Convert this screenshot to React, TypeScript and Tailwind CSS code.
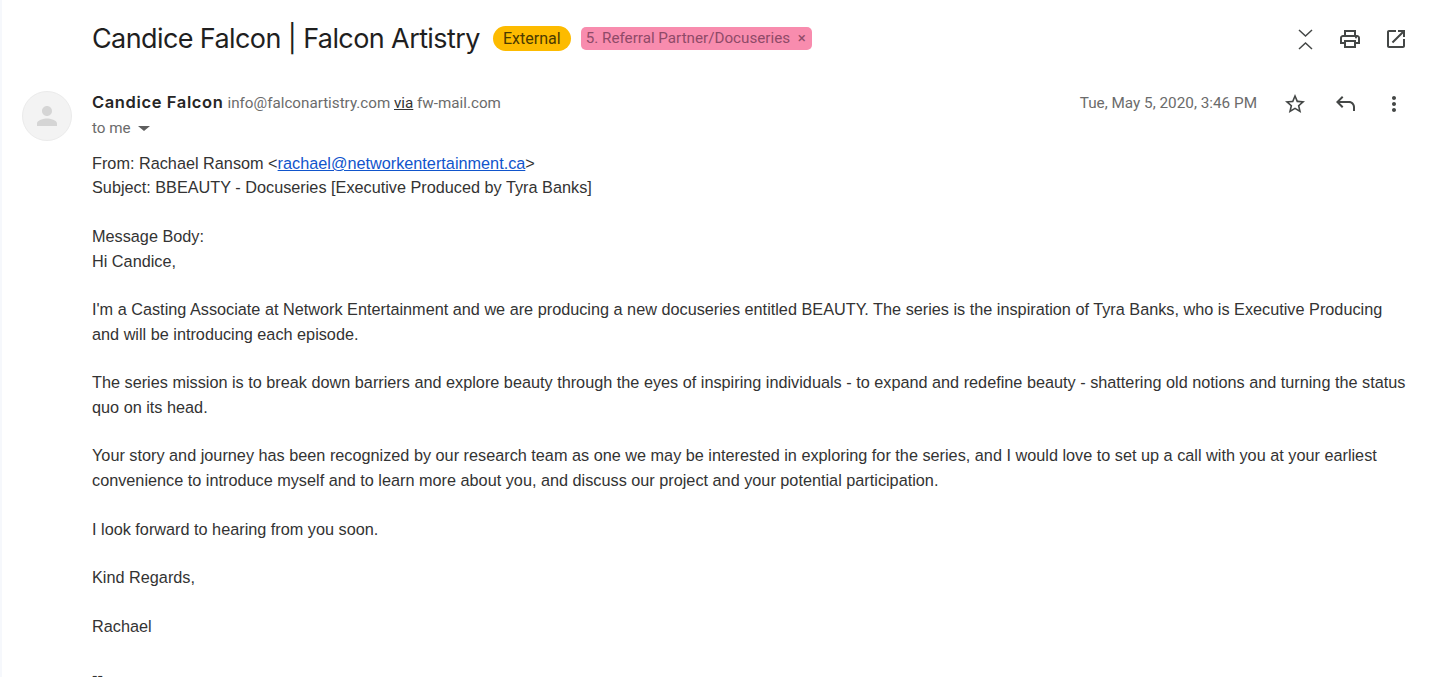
import React from "react";

const body = "font-['Liberation_Sans',Arial,sans-serif]";

const Icon = ({ d, className }: { d: string; className?: string }) => (
  <svg viewBox="0 0 24 24" className={className} fill="currentColor">
    <path d={d} />
  </svg>
);

const Paragraph = ({ children }: { children: React.ReactNode }) => <p className="mb-[24.3px]">{children}</p>;

export default function App() {
  return (
    <div className="h-[677px] w-[1432px] overflow-hidden bg-white border-l-2 border-[#f6f8fc]">
      {/* Subject */}
      <div className="flex h-[77px] items-start pl-[90px] pr-[24px] pt-[21px]">
        <h1 className="font-['Inter',sans-serif] text-[27px] leading-[36px] font-normal tracking-[-0.6px] text-[#1f1f1f]">
          Candice Falcon | Falcon Artistry
        </h1>
        <span className="ml-[13px] mt-[5px] flex h-[25px] w-[78px] items-center justify-center rounded-full bg-[#fdbb00] font-['Roboto',sans-serif] text-[16px] text-[#4a3a00]">
          External
        </span>
        <span className="ml-[10px] mt-[6px] flex h-[23px] w-[231px] items-center justify-between rounded-[5px] bg-[#f88cae] pl-[5px] pr-[6px] font-['Roboto',sans-serif] text-[15.2px] text-[#8f4a68]">
          5. Referral Partner/Docuseries
          <span className="text-[15px] leading-none">×</span>
        </span>
        <div className="ml-auto flex items-center gap-[22px] pt-[6px] text-[#444746]">
          <svg viewBox="0 0 24 24" className="h-[24px] w-[24px]" fill="none" stroke="currentColor" strokeWidth="1.5">
            <path d="M7 3l6.5 6L20 3M7 22l6.5-6 6.5 6" />
          </svg>
          <Icon className="h-[24px] w-[24px]" d="M19 8h-1V3H6v5H5c-1.66 0-3 1.34-3 3v6h4v4h12v-4h4v-6c0-1.66-1.34-3-3-3zM8 5h8v3H8V5zm8 12v2H8v-4h8v2zm2-2v-2H6v2H4v-4c0-.55.45-1 1-1h14c.55 0 1 .45 1 1v4h-2zm0-3.5a1 1 0 1 0 0-2 1 1 0 0 0 0 2z" />
          <Icon className="h-[24px] w-[24px]" d="M19 19H5V5h7V3H5c-1.11 0-2 .9-2 2v14c0 1.1.89 2 2 2h14c1.1 0 2-.9 2-2v-7h-2v7zM14 3v2h3.59l-9.83 9.83 1.41 1.41L19 6.41V10h2V3h-7z" />
        </div>
      </div>

      {/* Sender row */}
      <div className="flex pl-[20px] pr-[26px]">
        <div className="mt-[14px] flex h-[50px] w-[50px] shrink-0 items-center justify-center rounded-full border border-[#ebebeb] bg-[#f3f3f3] text-[#d5d5d5]">
          <Icon className="h-[30px] w-[30px]" d="M12 12c2.21 0 4-1.79 4-4s-1.79-4-4-4-4 1.79-4 4 1.79 4 4 4zm0 2c-2.67 0-8 1.34-8 4v2h16v-2c0-2.66-5.33-4-8-4z" />
        </div>
        <div className="ml-[20px] flex-1 pt-[14px]">
          <div className="flex h-[24px] items-baseline font-['Roboto',sans-serif]">
            <span className="font-['Inter',sans-serif] text-[16.5px] leading-[22px] font-semibold tracking-[0.62px] text-[#262626]">Candice Falcon</span>
            <span className="ml-[4px] text-[15.2px] leading-[24px] text-[#6b6b6b]">
              info@falconartistry.com <span className="text-[#333] underline">via</span> fw-mail.com
            </span>
            <div className="ml-auto flex items-center self-center pt-[2px] text-[#444746]">
              <span className="mb-[2px] mr-[26px] text-[15.3px] text-[#6b6b6b]">Tue, May 5, 2020, 3:46 PM</span>
              <Icon className="h-[24px] w-[24px]" d="M22 9.24l-7.19-.62L12 2 9.19 8.63 2 9.24l5.46 4.73L5.82 21 12 17.27 18.18 21l-1.63-7.03L22 9.24zM12 15.4l-3.76 2.27 1-4.28-3.32-2.88 4.38-.38L12 6.1l1.71 4.04 4.38.38-3.32 2.88 1 4.28L12 15.4z" />
              <Icon className="ml-[26px] h-[24px] w-[24px]" d="M20 19v-4c0-2.2-1.8-4-4-4H6.83l3.58 3.59L9 16l-6-6 6-6 1.41 1.41L6.83 9H16c3.31 0 6 2.69 6 6v4h-2z" />
              <Icon className="ml-[25px] h-[24px] w-[24px]" d="M12 8c1.1 0 2-.9 2-2s-.9-2-2-2-2 .9-2 2 .9 2 2 2zm0 2c-1.1 0-2 .9-2 2s.9 2 2 2 2-.9 2-2-.9-2-2-2zm0 6c-1.1 0-2 .9-2 2s.9 2 2 2 2-.9 2-2-.9-2-2-2z" />
            </div>
          </div>
          <div className="flex h-[26px] items-center font-['Roboto',sans-serif] text-[15.2px] text-[#6b6b6b]">
            to me
            <span className="ml-[7px] mt-[1px] h-0 w-0 border-x-[6px] border-t-[5px] border-x-transparent border-t-[#5e5e5e]" />
          </div>

          {/* Message */}
          <div className={`${body} mt-[10px] text-[16.25px] leading-[24.4px] text-[#333]`}>
            <p>
              From: Rachael Ransom &lt;<a className="text-[#1155cc] underline">rachael@networkentertainment.ca</a>&gt;
            </p>
            <Paragraph>Subject: BBEAUTY - Docuseries [Executive Produced by Tyra Banks]</Paragraph>
            <p>Message Body:</p>
            <Paragraph>Hi Candice,</Paragraph>
            <Paragraph>
              I'm a Casting Associate at Network Entertainment and we are producing a new docuseries entitled BEAUTY. The series is the inspiration of Tyra Banks, who is Executive Producing and will be introducing each episode.
            </Paragraph>
            <Paragraph>
              The series mission is to break down barriers and explore beauty through the eyes of inspiring individuals - to expand and redefine beauty - shattering old notions and turning the status quo on its head.
            </Paragraph>
            <Paragraph>
              Your story and journey has been recognized by our research team as one we may be interested in exploring for the series, and I would love to set up a call with you at your earliest convenience to introduce myself and to learn more about you, and discuss our project and your potential participation.
            </Paragraph>
            <Paragraph>I look forward to hearing from you soon.</Paragraph>
            <Paragraph>Kind Regards,</Paragraph>
            <Paragraph>Rachael</Paragraph>
            <p>--</p>
          </div>
        </div>
      </div>
    </div>
  );
}
